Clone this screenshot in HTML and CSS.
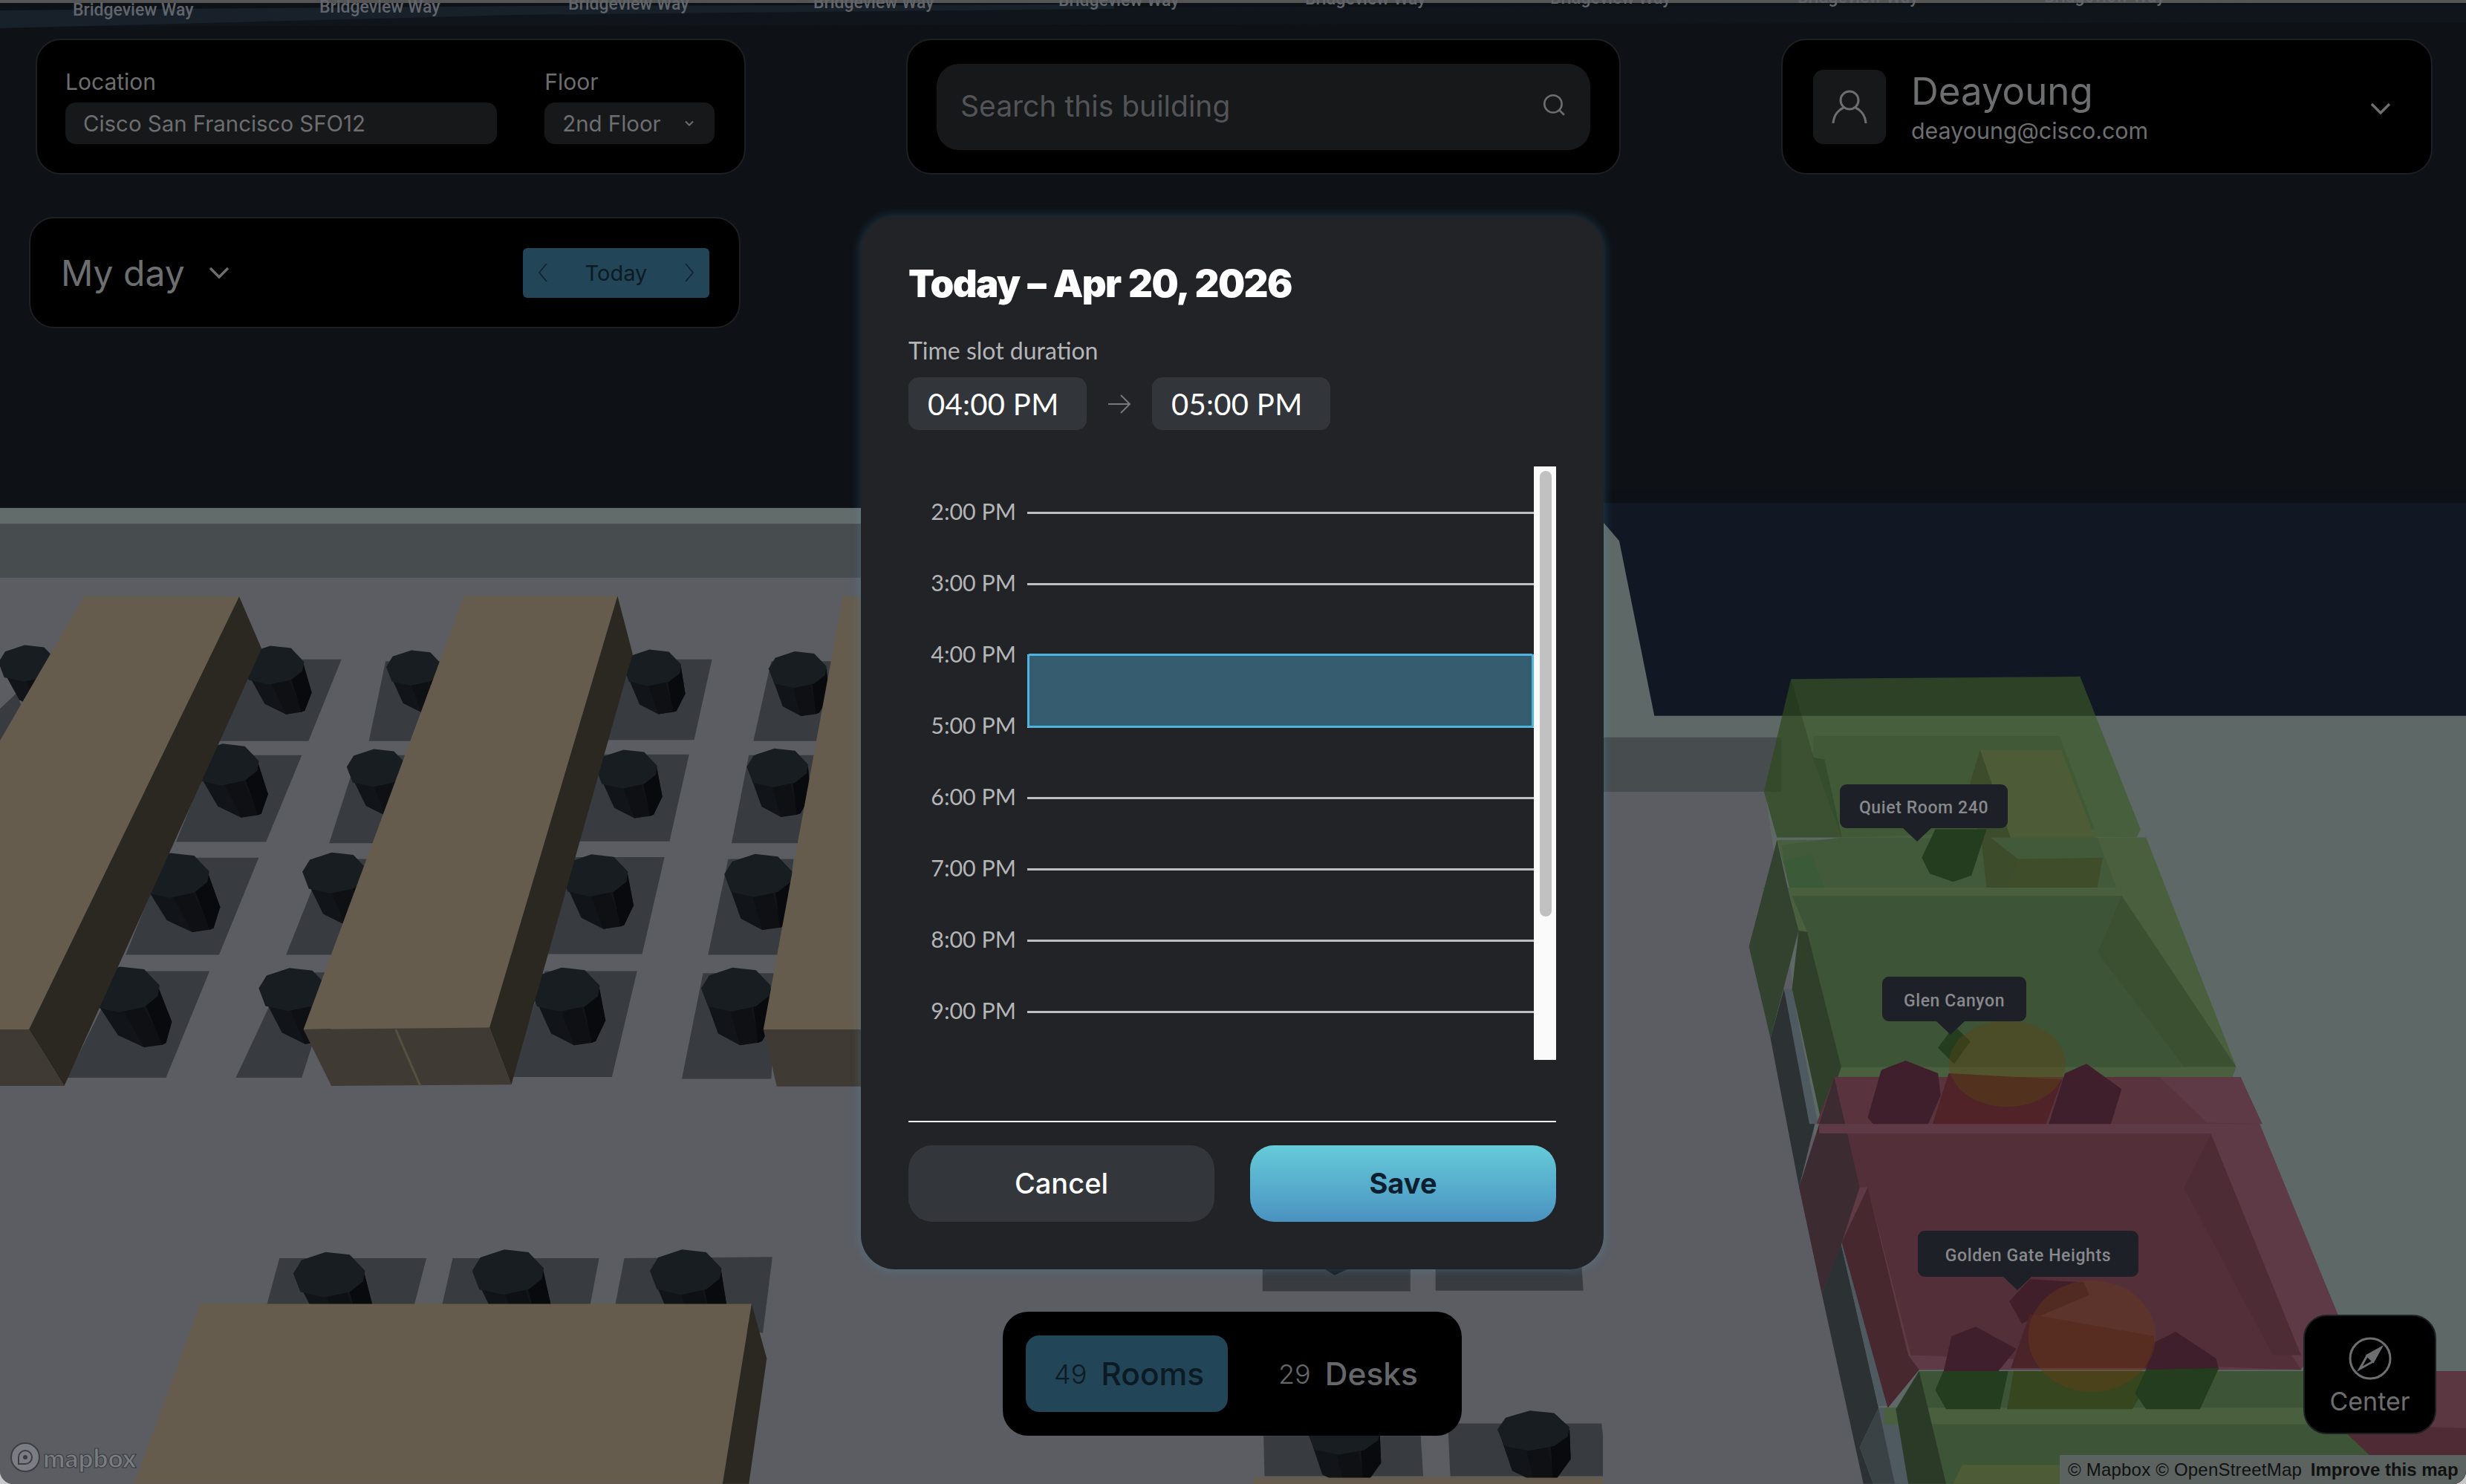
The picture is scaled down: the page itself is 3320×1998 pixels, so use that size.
FILE: index.html
```html
<!DOCTYPE html>
<html lang="en">
<head>
    <meta charset="UTF-8">
    <title>Cisco Spaces - Find a room</title>
    <link rel="stylesheet" href="styles.css">
</head>
<body>
<div class="page">

    <!-- Map, coordinates per group follow the area they cover -->
    <svg class="map" viewBox="0 0 3320 1998" width="3320" height="1998">
        <defs>
            <g id="chair-body">
                <polygon points="-60,-2 -37,66 0,84 39,78 62,46 60,-4" fill="#111418"/>
                <polygon points="-14,26 23,24 34,80 0,84" fill="#0e1014"/>
                <polygon points="28,22 60,-4 62,46 39,78 32,80" fill="#090a0d"/>
            </g>
            <polygon id="chair-top" points="-62,-4 -48,-24 -7,-36 34,-32 60,-8 57,8 34,24 -9,32 -50,24" fill="#181d22"/>
        </defs>

        <rect width="3320" height="1998" fill="#5b5d63"/>
        <rect width="3320" height="684" fill="#0e1217"/>
        <polygon points="0,18 1100,10 3320,6 3320,30 0,36" fill="#10151b"/>
        <polygon points="0,14 700,8 1500,6 1500,12 700,20 0,38" fill="#18202a"/>
        <rect width="3320" height="4" fill="#555555"/>

        <g class="road-label">
            <text x="98" y="21">Bridgeview Way</text>
            <text x="430" y="17">Bridgeview Way</text>
            <text x="765" y="13">Bridgeview Way</text>
            <text x="1095" y="11">Bridgeview Way</text>
            <text x="1425" y="8">Bridgeview Way</text>
            <text x="1757" y="6">Bridgeview Way</text>
            <text x="2087" y="5">Bridgeview Way</text>
            <text x="2420" y="4">Bridgeview Way</text>
            <text x="2752" y="3">Bridgeview Way</text>
        </g>

        <!-- left floor -->
        <g transform="translate(0 660) scale(.7524 .8532)">
            <rect x="0" y="28" width="1568" height="25" fill="#626c6b"/>
            <rect x="0" y="53" width="1568" height="85" fill="#474c4e"/>
            <g fill="#383c40">
                <polygon points="0,395 0,345 30,320 60,395"/>
                <polygon points="440,267 611,267 552,396 380,396"/>
                <polygon points="378,418 540,418 476,555 315,555"/>
                <polygon points="295,580 463,580 392,733 225,733"/>
                <polygon points="215,759 375,759 297,927 120,927"/>
                <polygon points="690,270 790,270 740,396 660,396"/>
                <polygon points="640,418 740,418 680,557 589,557"/>
                <polygon points="580,582 660,582 600,733 512,733"/>
                <polygon points="510,761 600,761 540,927 422,927"/>
                <polygon points="1130,267 1274,267 1242,394 1080,394"/>
                <polygon points="1080,417 1233,417 1198,554 1030,554"/>
                <polygon points="1020,579 1189,579 1149,732 975,732"/>
                <polygon points="975,759 1140,759 1095,926 915,926"/>
                <polygon points="1380,270 1490,270 1470,396 1348,396"/>
                <polygon points="1340,418 1460,418 1440,557 1309,557"/>
                <polygon points="1303,582 1420,582 1400,733 1267,733"/>
                <polygon points="1258,762 1390,762 1380,929 1220,929"/>
                <polygon points="500,1212 763,1212 740,1290 476,1290"/>
                <polygon points="810,1212 1072,1212 1055,1290 790,1290"/>
                <polygon points="1117,1212 1382,1210 1365,1330 1100,1290"/>
            </g>
            <g transform="translate(50 275) scale(.85)"><use href="#chair-body" transform="skewX(16)"/><use href="#chair-top"/></g>
            <g transform="translate(490 278) scale(.9)"><use href="#chair-body" transform="skewX(16)"/><use href="#chair-top"/></g>
            <g transform="translate(405 435) scale(.97)"><use href="#chair-body" transform="skewX(18)"/><use href="#chair-top"/></g>
            <g transform="translate(312 610) scale(1.04)"><use href="#chair-body" transform="skewX(20)"/><use href="#chair-top"/></g>
            <g transform="translate(222 790) scale(1.06)"><use href="#chair-body" transform="skewX(22)"/><use href="#chair-top"/></g>
            <g transform="translate(742 282) scale(.82)"><use href="#chair-body" transform="skewX(10)"/><use href="#chair-top"/></g>
            <g transform="translate(675 440) scale(.88)"><use href="#chair-body" transform="skewX(12)"/><use href="#chair-top"/></g>
            <g transform="translate(600 606) scale(.95)"><use href="#chair-body" transform="skewX(12)"/><use href="#chair-top"/></g>
            <g transform="translate(525 790) scale(1)"><use href="#chair-body" transform="skewX(14)"/><use href="#chair-top"/></g>
            <g transform="translate(1168 282) scale(.85)"><use href="#chair-body" transform="skewX(8)"/><use href="#chair-top"/></g>
            <g transform="translate(1122 442) scale(.9)"><use href="#chair-body" transform="skewX(10)"/><use href="#chair-top"/></g>
            <g transform="translate(1065 610) scale(.98)"><use href="#chair-body" transform="skewX(10)"/><use href="#chair-top"/></g>
            <g transform="translate(1012 790) scale(1.02)"><use href="#chair-body" transform="skewX(10)"/><use href="#chair-top"/></g>
            <g transform="translate(1428 285) scale(.85)"><use href="#chair-body" transform="skewX(4)"/><use href="#chair-top"/></g>
            <g transform="translate(1392 440) scale(.9)"><use href="#chair-body" transform="skewX(4)"/><use href="#chair-top"/></g>
            <g transform="translate(1358 610) scale(1)"><use href="#chair-body" transform="skewX(4)"/><use href="#chair-top"/></g>
            <g transform="translate(1318 790) scale(1.02)"><use href="#chair-body" transform="skewX(4)"/><use href="#chair-top"/></g>
            <g transform="translate(590 1240) scale(1.05)"><use href="#chair-body" transform="skewX(14)"/><use href="#chair-top"/></g>
            <g transform="translate(910 1236) scale(1.05)"><use href="#chair-body" transform="skewX(12)"/><use href="#chair-top"/></g>
            <g transform="translate(1228 1236) scale(1.05)"><use href="#chair-body" transform="skewX(8)"/><use href="#chair-top"/></g>

            <polygon points="150,168 428,168 52,851 0,851 0,395" fill="#655c4e"/>
            <polygon points="428,168 468,250 115,940 52,851" fill="#2b2821"/>
            <polygon points="0,851 52,851 115,940 0,940" fill="#3f3a33"/>
            <polygon points="830,167 1105,167 876,848 543,851" fill="#655c4e"/>
            <polygon points="1105,167 1132,258 915,938 876,848" fill="#2b2821"/>
            <polygon points="543,851 876,848 915,938 593,940" fill="#3f3a33"/>
            <line x1="708" y1="851" x2="752" y2="940" stroke="#55503f" stroke-width="4"/>
            <polygon points="1508,168 1568,168 1568,851 1366,851" fill="#655c4e"/>
            <polygon points="1366,851 1568,851 1568,941 1390,941" fill="#3f3a33"/>
            <polygon points="358,1284 1345,1284 1293,1568 240,1568" fill="#655c4e"/>
            <polygon points="1345,1284 1372,1370 1340,1568 1293,1568" fill="#2b2821"/>
        </g>

        <!-- under the modal and the tabs -->
        <g transform="translate(1140 960) scale(.6633 .662)">
            <polygon points="844,1100 1144,1100 1144,1176 844,1176" fill="#383c40"/>
            <polygon points="1195,1100 1490,1100 1495,1175 1195,1175" fill="#383c40"/>
            <polygon points="960,1125 1030,1125 990,1143" fill="#181d22"/>
            <polygon points="846,1470 1165,1470 1170,1552 848,1552" fill="#383c40"/>
            <polygon points="1220,1445 1532,1445 1545,1552 1225,1552" fill="#383c40"/>
            <g transform="translate(1010 1470) scale(1.2)"><use href="#chair-body"/><use href="#chair-top"/></g>
            <g transform="translate(1395 1462) scale(1.2)"><use href="#chair-body"/><use href="#chair-top"/></g>
            <polygon points="825,1555 1568,1555 1568,1568 825,1568" fill="#655c4e"/>
        </g>

        <!-- right floor with the rooms -->
        <g transform="translate(2180 660) scale(.7273 .8532)">
            <rect x="-30" y="0" width="1600" height="1600" fill="#5e6866"/>
            <polygon points="-30,0 1568,0 1568,356 65,356 0,80 -30,50" fill="#111824"/>
            <rect x="-30" y="0" width="1600" height="20" fill="#0d1016"/>
            <polygon points="-30,390 300,390 300,476 -30,476" fill="#474c4e"/>
            <polygon points="-30,476 270,476 460,1600 -30,1600" fill="#5b5d63"/>

            <polygon points="280,865 305,787 362,1000 333,1100" fill="#2c3134"/>
            <polygon points="375,1268 410,1187 480,1448 445,1510 470,1568 452,1568" fill="#2c3134"/>
            <polygon points="445,1510 480,1448 520,1568 470,1568" fill="#3a4246"/>
            <polygon points="305,787 320,787 368,1000 352,1000" fill="#4e5a60"/>
            <polygon points="410,1187 425,1187 495,1445 480,1445" fill="#4e5a60"/>
            <polygon points="480,1448 520,1448 535,1568 510,1568" fill="#4e5a60"/>

            <!-- red room at the far right, behind the lower green room -->
            <polygon points="1260,1390 1568,1390 1568,1568 1450,1568" fill="#5a3741"/>

            <!-- Quiet Room -->
            <polygon points="318,298 853,294 965,535 958,548 292,548 268,476" fill="#3c5b27" fill-opacity=".63"/>
            <polygon points="360,388 815,388 880,535 412,548 358,422" fill="#28461e" fill-opacity=".22"/>
            <polygon points="318,298 360,422 380,425 412,548 292,548 268,476" fill="#14280f" fill-opacity=".25"/>
            <polygon points="292,552 975,548 1010,627 315,627" fill="#4a5f3e"/>
            <polygon points="668,410 818,410 895,580 738,582" fill="#4d5c36"/>
            <polygon points="668,410 738,582 720,627 680,627 650,460" fill="#3d4c2a"/>
            <polygon points="412,548 885,548 920,627 315,627 300,560" fill="#425a3a"/>
            <polygon points="305,585 355,575 380,627 315,627" fill="#3a5a38"/>
            <polygon points="668,535 738,582 720,627 680,627" fill="#3d4c2a"/>
            <polygon points="738,582 895,580 885,627 720,627" fill="#3f4d2b"/>
            <polygon points="585,535 680,535 652,608 618,618 575,605 560,580" fill="#243d1e"/>

            <!-- Glen Canyon -->
            <polygon points="265,627 925,627 975,548 1142,910 1135,926 398,926 332,695" fill="#4a5f3e"/>
            <polygon points="292,552 315,640 332,695 280,865 240,720" fill="#33422e"/>
            <polygon points="320,640 930,640 885,730 1045,910 411,910 348,697" fill="#3e5437"/>
            <polygon points="930,640 1142,910 1045,910 885,730" fill="#3a5030"/>
            <polygon points="348,697 411,910 375,1000 320,787 332,695" fill="#303f2a"/>
            <polygon points="590,880 620,845 650,870 620,905" fill="#243d1e"/>

            <!-- Golden Gate Heights -->
            <polygon points="398,926 1150,926 1330,1300 1262,1388 555,1388 497,1448 412,1187 375,1268 333,1100" fill="#5d3a45"/>
            <polygon points="398,926 1150,926 1190,1000 365,1000" fill="#59343f"/>
            <polygon points="1000,926 1150,926 1190,1000 1088,998" fill="#5d3a45"/>
            <polygon points="370,1015 1095,1015 1045,1100 1262,1388 540,1365 460,1100 445,1100" fill="#533039"/>
            <polygon points="1095,1015 1262,1365 1210,1365 1045,1100" fill="#4d2c36"/>
            <polygon points="398,926 445,1100 412,1187 375,1268 333,1100" fill="#3c2b30"/>
            <polygon points="460,1100 535,1365 555,1388 497,1448 412,1187" fill="#47282f"/>
            <rect x="370" y="1000" width="730" height="15" fill="#5d3a45"/>
            <polygon points="460,990 485,915 530,900 590,920 595,955 572,1000 470,1000" fill="#3e1f2b"/>
            <polygon points="795,1000 825,920 865,905 930,945 910,1000" fill="#3e1f2b"/>
            <polygon points="580,1000 610,920 820,930 790,1000" fill="#4f2328"/>
            <polygon points="722,1280 760,1245 860,1250 870,1270 745,1315" fill="#401f2b"/>
            <polygon points="725,1385 760,1300 990,1335 990,1385" fill="#4a2429"/>

            <!-- lower green room -->
            <polygon points="555,1390 1290,1390 1450,1568 600,1568 512,1450" fill="#3d5436"/>
            <rect x="490" y="1448" width="800" height="26" fill="#4a5f3e"/>
            <polygon points="512,1450 555,1390 605,1568 535,1568" fill="#2b3a27"/>
            <polygon points="618,1568 635,1538 815,1538 815,1568" fill="#4d5c36"/>
            <polygon points="615,1335 660,1320 735,1355 700,1392 600,1392" fill="#3e1f2b"/>
            <polygon points="600,1390 720,1390 705,1450 605,1450 585,1420" fill="#243d1e"/>
            <polygon points="730,1390 990,1390 950,1450 718,1450" fill="#36461f"/>
            <polygon points="990,1345 1030,1328 1105,1370 1110,1388 975,1388" fill="#3e1f2b"/>
            <polygon points="975,1388 1110,1385 1075,1450 975,1450 955,1425" fill="#243d1e"/>
            <polygon points="1330,1475 1568,1480 1568,1568 1445,1568" fill="#4f2b36"/>

            <!-- lights seen through the room blocks -->
            <ellipse cx="718" cy="905" rx="108" ry="68" fill="#5a4614" fill-opacity=".42"/>
            <ellipse cx="875" cy="1335" rx="118" ry="88" fill="#6e3c14" fill-opacity=".38"/>
        </g>
    </svg>

    <!-- Top bar -->
    <div class="topbar">
        <div class="panel panel-location">
            <div class="field field-location">
                <span class="field-label">Location</span>
                <div class="select">Cisco San Francisco SFO12</div>
            </div>
            <div class="field field-floor">
                <span class="field-label">Floor</span>
                <div class="select">
                    2nd Floor
                    <svg class="icon-small" viewBox="0 0 16 16"><path d="M4 6l4 4 4-4"/></svg>
                </div>
            </div>
        </div>

        <div class="panel panel-search">
            <div class="search">
                <span>Search this building</span>
                <svg class="icon-search" viewBox="0 0 32 32"><circle cx="15" cy="14" r="11"/><path d="M23 22l6 6"/></svg>
            </div>
        </div>

        <div class="panel panel-user">
            <div class="avatar">
                <svg viewBox="0 0 50 50"><circle cx="25" cy="16" r="12"/><path d="M3 47c1-13 9-19 14-21M47 47c-1-13-9-19-14-21"/></svg>
            </div>
            <div class="user-text">
                <div class="user-name">Deayoung</div>
                <div class="user-mail">deayoung@cisco.com</div>
            </div>
            <svg class="icon-chevron" viewBox="0 0 28 18"><path d="M2 3l12 12L26 3"/></svg>
        </div>
    </div>

    <!-- My day -->
    <div class="panel panel-day">
        <div class="day-title">
            My day
            <svg class="icon-chevron" viewBox="0 0 28 18"><path d="M2 3l12 12L26 3"/></svg>
        </div>
        <div class="day-nav">
            <svg viewBox="0 0 14 28"><path d="M12 2L2 14l10 12"/></svg>
            <span>Today</span>
            <svg viewBox="0 0 14 28"><path d="M2 2l10 12L2 26"/></svg>
        </div>
    </div>

    <!-- Room pins -->
    <div class="pin pin-quiet">Quiet Room 240</div>
    <div class="pin pin-glen">Glen Canyon</div>
    <div class="pin pin-golden">Golden Gate Heights</div>

    <!-- Time slot modal -->
    <div class="modal">
        <h2 class="modal-title">Today – Apr 20, 2026</h2>
        <div class="slot-label">Time slot duration</div>
        <div class="slot-times">
            <div class="time-pill">04:00 PM</div>
            <svg class="slot-arrow" viewBox="0 0 32 28"><path d="M1 14h29M18 2l12 12-12 12"/></svg>
            <div class="time-pill">05:00 PM</div>
        </div>

        <div class="timeline">
            <div class="hours">
                <div class="hour"><span>2:00 PM</span><i></i></div>
                <div class="hour"><span>3:00 PM</span><i></i></div>
                <div class="hour"><span>4:00 PM</span><i></i></div>
                <div class="hour"><span>5:00 PM</span><i></i></div>
                <div class="hour"><span>6:00 PM</span><i></i></div>
                <div class="hour"><span>7:00 PM</span><i></i></div>
                <div class="hour"><span>8:00 PM</span><i></i></div>
                <div class="hour"><span>9:00 PM</span><i></i></div>
            </div>
            <div class="selected-slot"></div>
            <div class="scrollbar"><div class="scroll-thumb"></div></div>
        </div>

        <div class="modal-actions">
            <button class="btn btn-cancel">Cancel</button>
            <button class="btn btn-save">Save</button>
        </div>
    </div>

    <!-- Rooms / Desks -->
    <div class="tabs">
        <div class="tab tab-active"><span class="tab-count">49</span>Rooms</div>
        <div class="tab"><span class="tab-count">29</span>Desks</div>
    </div>

    <!-- Center -->
    <div class="center-btn">
        <svg viewBox="0 0 60 60"><circle cx="30" cy="30" r="27"/><path class="needle" d="M44 16L34 34 26 26z"/><path d="M44 16L34 34 16 44 26 26z"/></svg>
        <span>Center</span>
    </div>

    <!-- Map credits -->
    <div class="mapbox-logo">
        <svg viewBox="0 0 44 44"><circle cx="22" cy="22" r="19"/><path d="M13 31v-9a9 9 0 1 1 9 9z"/><circle class="logo-dot" cx="22" cy="22" r="3"/></svg>
        <span>mapbox</span>
    </div>
    <div class="attribution">© Mapbox © OpenStreetMap <b>Improve this map</b></div>

</div>
</body>
</html>
```

FILE: styles.css
```css
* {
    box-sizing: border-box;
}

body {
    margin: 0;
    background: #c8c8c8;
    font-family: Inter, "Noto Sans", sans-serif;
}

.page {
    position: relative;
    width: 3320px;
    height: 1998px;
    overflow: hidden;
    border-radius: 0 0 18px 18px;
    background: #5b5d63;
}

.map {
    position: absolute;
    left: 0;
    top: 0;
}

.road-label text {
    font-family: Roboto, sans-serif;
    font-size: 23px;
    font-weight: 500;
    fill: #62666c;
}

/* top panels */
.topbar {
    position: absolute;
    left: 48px;
    top: 52px;
    display: flex;
    gap: 216px;
}

.panel {
    display: flex;
    background: #000;
    border: 2px solid #1d2023;
    border-radius: 34px;
}

.panel-location {
    width: 956px;
    height: 183px;
    padding: 40px 40px 0 38px;
    gap: 64px;
}

.field-label {
    display: block;
    height: 44px;
    font-size: 30px;
    line-height: 32px;
    color: #6d6e70;
}

.field-location {
    width: 582px;
}

.field-floor {
    width: 229px;
}

.select {
    display: flex;
    align-items: center;
    justify-content: space-between;
    height: 56px;
    padding: 0 24px;
    background: #17181a;
    border-radius: 14px;
    font-size: 29.4px;
    color: #6d6e70;
}

.icon-small {
    width: 20px;
    height: 20px;
    fill: none;
    stroke: #6d6e70;
    stroke-width: 1.6;
}

.panel-search {
    width: 962px;
    height: 183px;
    padding: 32px 39px 0;
}

.search {
    display: flex;
    align-items: center;
    justify-content: space-between;
    width: 880px;
    height: 116px;
    padding: 0 32px 4px 32px;
    background: #17181a;
    border-radius: 30px;
    font-size: 39px;
    color: #535457;
}

.icon-search {
    width: 34px;
    height: 34px;
    fill: none;
    stroke: #6d6e70;
    stroke-width: 2.4;
}

.panel-user {
    width: 877px;
    height: 183px;
    padding: 40px 54px 0 41px;
}

.avatar {
    display: flex;
    align-items: center;
    justify-content: center;
    width: 98px;
    height: 100px;
    background: #17181a;
    border-radius: 14px;
}

.avatar svg {
    width: 50px;
    height: 50px;
    fill: none;
    stroke: #6d6e70;
    stroke-width: 3;
}

.user-text {
    flex: 1;
    margin-left: 34px;
}

.user-name {
    margin-top: -1px;
    font-size: 51px;
    line-height: 60px;
    color: #6d6e70;
}

.user-mail {
    margin-top: 4px;
    font-size: 30.4px;
    line-height: 38px;
    color: #6d6e70;
}

.icon-chevron {
    width: 28px;
    height: 18px;
    fill: none;
    stroke: #6d6e70;
    stroke-width: 3.4;
}

.panel-user .icon-chevron {
    margin-top: 43px;
}

/* my day */
.panel-day {
    position: absolute;
    left: 39px;
    top: 292px;
    width: 958px;
    height: 150px;
    align-items: center;
    justify-content: space-between;
    padding: 0 40px 0 41px;
}

.day-title {
    display: flex;
    align-items: center;
    gap: 32px;
    font-size: 48px;
    color: #6d6e70;
}

.day-nav {
    display: flex;
    align-items: center;
    justify-content: space-between;
    width: 251px;
    height: 67px;
    padding: 0 20px;
    background: #224558;
    border-radius: 6px;
    font-size: 29px;
    color: #0c1a23;
}

.day-nav svg {
    width: 14px;
    height: 28px;
    fill: none;
    stroke: #0f2431;
    stroke-width: 1.8;
}

.pin {
    position: absolute;
    display: flex;
    align-items: center;
    justify-content: center;
    padding-top: 4px;
    background: #1d2027;
    border-radius: 9px;
    font-family: Roboto, sans-serif;
    font-weight: 500;
    font-size: 23px;
    letter-spacing: 0.6px;
    color: #88898c;
}

.pin::after {
    content: "";
    position: absolute;
    top: 100%;
    border-left: 19px solid transparent;
    border-right: 19px solid transparent;
    border-top: 18px solid #1d2027;
}

.pin-quiet {
    left: 2477px;
    top: 1056px;
    width: 226px;
    height: 59px;
}

.pin-quiet::after {
    left: 85px;
}

.pin-glen {
    left: 2534px;
    top: 1315px;
    width: 194px;
    height: 60px;
}

.pin-glen::after {
    left: 73px;
}

.pin-golden {
    left: 2582px;
    top: 1657px;
    width: 297px;
    height: 62px;
}

.pin-golden::after {
    left: 115px;
}

/* modal */
.modal {
    position: absolute;
    left: 1159px;
    top: 291px;
    width: 1000px;
    height: 1418px;
    padding: 58px 64px 0;
    background: #212327;
    border-radius: 46px;
    box-shadow: 0 0 14px rgba(90, 170, 220, 0.28);
}

.modal-title {
    margin: 0;
    font-size: 51px;
    line-height: 66px;
    font-weight: 900;
    letter-spacing: -1.6px;
    word-spacing: 2px;
    color: #fff;
}

.slot-label {
    margin-top: 38px;
    font-family: Lato, sans-serif;
    font-size: 32px;
    line-height: 38px;
    color: #b4b5b7;
}

.slot-times {
    display: flex;
    align-items: center;
    margin-top: 17px;
}

.time-pill {
    display: flex;
    align-items: center;
    width: 240px;
    height: 71px;
    padding-left: 26px;
    background: #32353a;
    border-radius: 14px;
    font-family: Lato, sans-serif;
    font-size: 40px;
    letter-spacing: 0.3px;
    color: #fff;
}

.slot-arrow {
    width: 32px;
    height: 28px;
    margin: 0 28px;
    fill: none;
    stroke: #77797c;
    stroke-width: 2;
}

.timeline {
    position: relative;
    height: 799px;
    margin-top: 49px;
}

.hours {
    padding-top: 14px;
}

.hour {
    display: flex;
    align-items: center;
    height: 96px;
    padding-right: 30px;
}

.hour span {
    width: 145px;
    margin-top: -4px;
    text-align: right;
    font-family: Lato, sans-serif;
    font-size: 30.4px;
    color: #b4b5b7;
}

.hour i {
    flex: 1;
    height: 3px;
    margin-left: 15px;
    background: #bfc0c1;
}

.selected-slot {
    position: absolute;
    left: 160px;
    right: 30px;
    top: 252px;
    height: 100px;
    background: #365c70;
    border: 3px solid #4fb3e0;
    border-radius: 4px;
}

.scrollbar {
    position: absolute;
    right: 0;
    top: 0;
    bottom: 0;
    width: 30px;
    padding: 6px 6px 0 8px;
    background: #fafafa;
}

.scroll-thumb {
    height: 600px;
    background: #c1c1c1;
    border-radius: 8px;
}

.modal-actions {
    display: flex;
    gap: 48px;
    margin-top: 82px;
    padding-top: 31px;
    border-top: 2px solid #f0f0f0;
}

.btn {
    flex: 1;
    height: 103px;
    padding-bottom: 3px;
    border: none;
    border-radius: 32px;
    font-family: Inter, sans-serif;
    font-size: 38px;
}

.btn-cancel {
    background: #33363b;
    color: #fff;
    font-weight: 500;
}

.btn-save {
    background: linear-gradient(to bottom, #66cbd9, #4a92c1);
    color: #0b1f2e;
    font-weight: 700;
}

/* rooms and desks */
.tabs {
    position: absolute;
    left: 1350px;
    top: 1766px;
    display: flex;
    gap: 30px;
    width: 618px;
    height: 167px;
    padding: 32px 31px;
    background: #000;
    border-radius: 34px;
}

.tab {
    display: flex;
    align-items: center;
    height: 103px;
    padding: 0 38px;
    border-radius: 18px;
    font-size: 42.5px;
    font-weight: 500;
    color: #66676a;
}

.tab-active {
    width: 272px;
    background: #224558;
    color: #0c1a23;
}

.tab-count {
    margin-right: 19px;
    font-size: 36px;
    font-weight: 300;
}

/* center button */
.center-btn {
    position: absolute;
    left: 3101px;
    top: 1770px;
    display: flex;
    flex-direction: column;
    align-items: center;
    width: 179px;
    height: 161px;
    padding-top: 27px;
    background: #000;
    border: 2px solid #1d2023;
    border-radius: 32px;
    font-size: 34px;
    line-height: 34px;
    color: #6d6e70;
}

.center-btn svg {
    width: 60px;
    height: 60px;
    margin-bottom: 11px;
    fill: none;
    stroke: #6d6e70;
    stroke-width: 3;
}

.center-btn .needle {
    fill: #6d6e70;
}

/* credits */
.mapbox-logo {
    position: absolute;
    left: 12px;
    top: 1940px;
    display: flex;
    align-items: center;
    gap: 2px;
    height: 44px;
    font-family: Lato, sans-serif;
    font-size: 35px;
    font-weight: 900;
    color: #7a7d83;
    -webkit-text-stroke: 1.2px #3c3e42;
}

.mapbox-logo svg {
    width: 44px;
    height: 44px;
    fill: #7a7d83;
    stroke: #3c3e42;
    stroke-width: 2;
}

.mapbox-logo .logo-dot {
    fill: #3c3e42;
    stroke: none;
}

.attribution {
    position: absolute;
    right: 0;
    bottom: 0;
    width: 547px;
    height: 39px;
    padding-left: 11px;
    background: #5b6260;
    font-family: "Liberation Sans", sans-serif;
    font-size: 24px;
    letter-spacing: 0.2px;
    line-height: 39px;
    white-space: nowrap;
    color: #111;
}

.attribution b {
    margin-left: 5px;
    letter-spacing: 0;
}
```
